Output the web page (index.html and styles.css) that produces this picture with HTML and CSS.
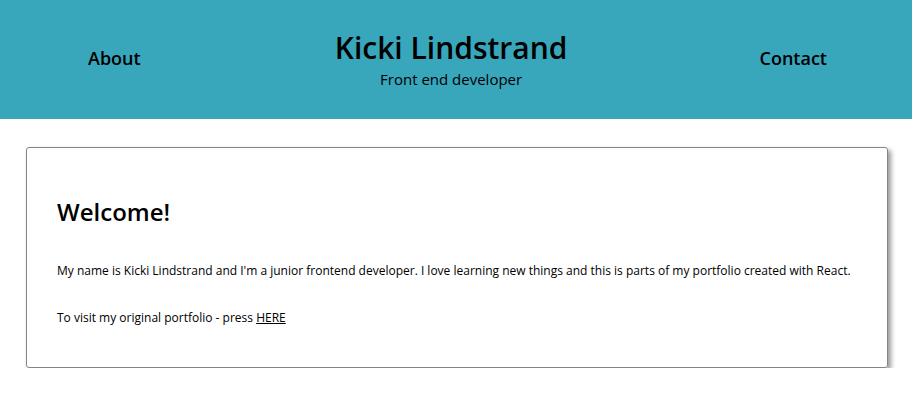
FILE: index.html
```html
<!DOCTYPE html>
<html lang="en">
<head>
<meta charset="utf-8">
<title>Kicki Lindstrand</title>
<link rel="stylesheet" href="styles.css">
</head>
<body>
<header class="header">
  <a class="nav-link" href="#">About</a>
  <div class="brand">
    <h1 class="brand-name">Kicki Lindstrand</h1>
    <p class="brand-role">Front end developer</p>
  </div>
  <a class="nav-link" href="#">Contact</a>
</header>
<main class="main">
  <section class="card">
    <h2 class="card-title">Welcome!</h2>
    <p class="card-text">My name is Kicki Lindstrand and I'm a junior frontend developer. I love learning new things and this is parts of my portfolio created with React.</p>
    <p class="card-text">To visit my original portfolio - press <a class="card-link" href="#">HERE</a></p>
  </section>
</main>
</body>
</html>
```
FILE: styles.css
```css
* { box-sizing: border-box; }
body {
  margin: 0;
  font-family: "Open Sans", "Noto Sans", sans-serif;
  color: #000;
  background: #fff;
}
.header {
  height: 119px;
  background: #38a6bb;
  display: flex;
  justify-content: space-between;
  align-items: center;
  padding: 0 85px 0 88px;
}
.nav-link {
  color: #000;
  text-decoration: none;
  font-size: 18px;
  font-weight: 600;
  margin-bottom: 3px;
}
.brand {
  text-align: center;
  padding-left: 2px;
}
.brand-name {
  margin: 0;
  font-size: 30px;
  font-weight: 600;
  line-height: 34px;
}
.brand-role {
  margin: 4px 0 0;
  font-size: 15px;
  line-height: 20px;
}
.main {
  padding: 28px 24px 0 26px;
}
.card {
  border: 1px solid #858585;
  border-radius: 3px;
  box-shadow: 3px 3px 5px #999;
  padding: 48px 24px 40px 30px;
}
.card-title {
  margin: 0 0 34px;
  font-size: 24px;
  font-weight: 600;
  line-height: 32px;
}
.card-text {
  margin: 0 0 29px;
  font-size: 12px;
  line-height: 18px;
}
.card-text:last-child { margin-bottom: 0; }
.card-link { color: #000; }
```
